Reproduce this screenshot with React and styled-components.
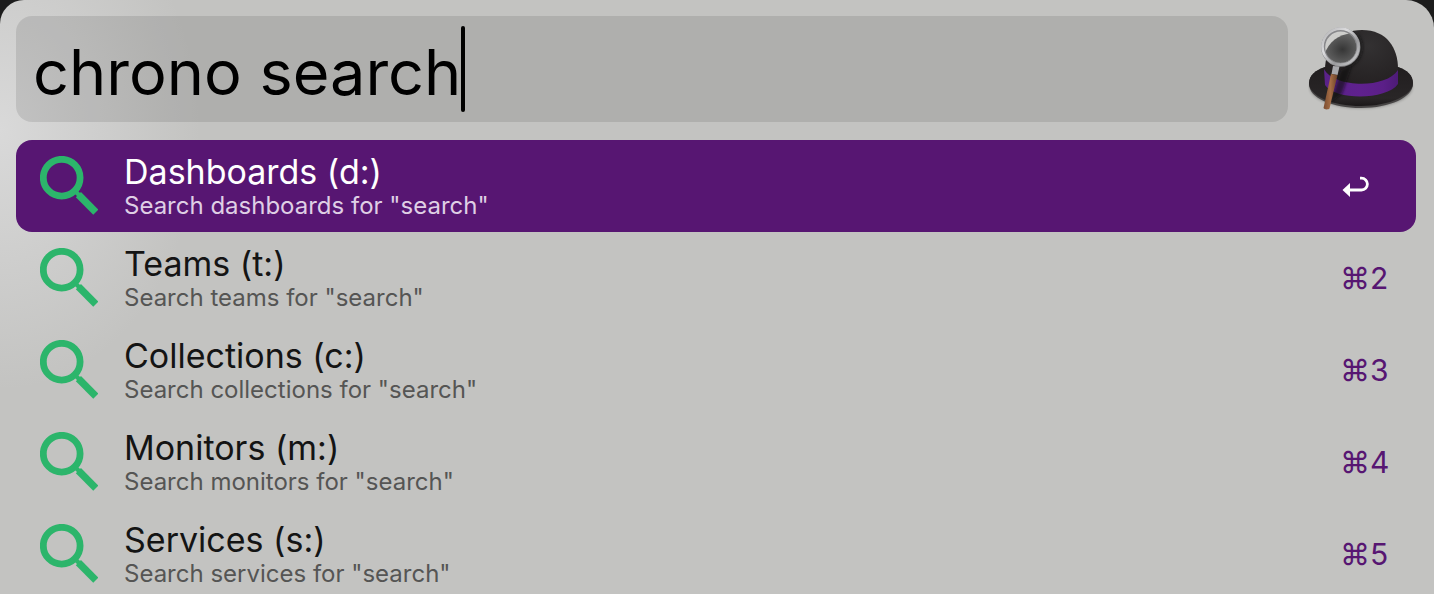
import React, { useState } from "react";
import styled, { createGlobalStyle } from "styled-components";

const GlobalStyle = createGlobalStyle`
  *, *::before, *::after { box-sizing: border-box; }
  html, body { margin: 0; }
  body {
    background: #1c1c1c;
    font-family: Inter, "Liberation Sans", sans-serif;
  }
`;

const Panel = styled.main`
  height: 100vh;
  overflow: hidden;
  padding: 16px 18px 0 16px;
  border-radius: 24px 28px 0 0;
  display: flex;
  flex-direction: column;
  gap: 18px;
  background:
    radial-gradient(ellipse 200px 260px at 0 130px, #d9d9d9 0%, #d9d9d900 100%),
    #c3c3c1;
`;

const SearchBar = styled.form`
  display: flex;
  align-items: center;
  gap: 20px;
`;

const Field = styled.label`
  flex: 1;
  height: 106px;
  padding: 0 17px;
  border-radius: 16px;
  display: flex;
  align-items: center;
  background: rgba(0, 0, 0, 0.102);
`;

const Query = styled.input`
  field-sizing: content;
  height: 86px;
  border: 0;
  padding: 6px 0 0;
  outline: 0;
  background: transparent;
  color: #000;
  font: 400 63px/80px Inter, "Liberation Sans", sans-serif;
  caret-color: transparent;
`;

const Caret = styled.span`
  width: 4px;
  height: 86px;
  border-radius: 2px;
  background: #000;
`;

const HatIcon = styled.svg`
  width: 108px;
  height: 92px;
  flex: none;
`;

const Results = styled.ul`
  margin: 0;
  padding: 0;
  list-style: none;
`;

const ResultButton = styled.button`
  width: 100%;
  height: 92px;
  padding: 0 28px 0 24px;
  border: 0;
  border-radius: 16px;
  display: flex;
  align-items: center;
  gap: 26px;
  font: inherit;
  text-align: left;
  background: ${(p) => (p.$active ? "#571672" : "transparent")};
  color: ${(p) => (p.$active ? "#fff" : "#141414")};
`;

const LensIcon = styled.svg`
  width: 58px;
  height: 60px;
  flex: none;
`;

const Copy = styled.span`
  flex: 1;
  padding-top: 4px;
  display: flex;
  flex-direction: column;
`;

const Title = styled.span`
  font-size: 34px;
  line-height: 36px;
`;

const Subtitle = styled.span`
  font-size: 24px;
  line-height: 32px;
  color: ${(p) => (p.$active ? "#dfcfe5" : "#555554")};
`;

const Shortcut = styled.span`
  width: 48px;
  display: flex;
  font-size: 30px;
  line-height: 40px;
  color: #571672;
`;

const ReturnIcon = styled.svg`
  width: 30px;
  height: 24px;
`;

const results = [
  { title: "Dashboards (d:)", noun: "dashboards" },
  { title: "Teams (t:)", noun: "teams" },
  { title: "Collections (c:)", noun: "collections" },
  { title: "Monitors (m:)", noun: "monitors" },
  { title: "Services (s:)", noun: "services" },
];

function Lens() {
  return (
    <LensIcon viewBox="0 0 58 60" aria-hidden="true" fill="none" stroke="#2cb56b">
      <circle cx="21.7" cy="21.7" r="18.4" strokeWidth="6.8" />
      <path d="M35 35L39 39" strokeWidth="4.4" />
      <path d="M38.4 38.6L55.8 56.2" strokeWidth="7.2" />
    </LensIcon>
  );
}

function BowlerHat() {
  return (
    <HatIcon viewBox="0 0 108 92" role="img" aria-label="Alfred">
      <defs>
        <radialGradient id="crown" cx="0.6" cy="0.25" r="0.7">
          <stop offset="0" stopColor="#333132" />
          <stop offset="0.6" stopColor="#292627" />
          <stop offset="1" stopColor="#231f20" />
        </radialGradient>
        <linearGradient id="brim" x1="0" y1="0" x2="0" y2="1">
          <stop offset="0" stopColor="#211e1f" />
          <stop offset="0.8" stopColor="#292627" />
          <stop offset="1" stopColor="#1b1819" />
        </linearGradient>
        <linearGradient id="band" x1="0" y1="0" x2="1" y2="0">
          <stop offset="0" stopColor="#5a2289" />
          <stop offset="0.5" stopColor="#5f218e" />
          <stop offset="0.8" stopColor="#5b1f88" />
          <stop offset="1" stopColor="#4d1b77" />
        </linearGradient>
        <radialGradient id="glass" cx="0.5" cy="0.5" r="0.55">
          <stop offset="0" stopColor="#363636" />
          <stop offset="1" stopColor="#6b6b6b" />
        </radialGradient>
        <linearGradient id="rim" x1="0" y1="0" x2="1" y2="1">
          <stop offset="0" stopColor="#aeaeb0" />
          <stop offset="0.35" stopColor="#dcdcde" />
          <stop offset="0.65" stopColor="#9a9a9d" />
          <stop offset="1" stopColor="#d4d4d6" />
        </linearGradient>
        <linearGradient id="wood" x1="0" y1="0" x2="1" y2="0">
          <stop offset="0" stopColor="#7a4c30" />
          <stop offset="0.5" stopColor="#a56d45" />
          <stop offset="1" stopColor="#6b4128" />
        </linearGradient>
        <filter id="soft" x="-20%" y="-20%" width="140%" height="140%">
          <feGaussianBlur stdDeviation="1.5" />
        </filter>
        <clipPath id="lensShape">
          <circle cx="32.5" cy="24" r="16" />
        </clipPath>
      </defs>
      <ellipse cx="53" cy="64" rx="51" ry="21" fill="#000" opacity="0.35" filter="url(#soft)" />
      <path d="M1 61C1 52 8 47 17 44L90 44C99 47 105 53 105 61C105 74 82 85 53 85C24 85 1 75 1 61Z" fill="#474545" />
      <path d="M1 60C1 52 8 47 17 44L90 44C99 47 105 52 105 60C105 72 82 83 53 83C24 83 1 73 1 60Z" fill="url(#brim)" />
      <path d="M17 47C17 25 30 7 54 7C79 7 90 25 90 46L90 62C76 75 30 75 17 62Z" fill="url(#crown)" />
      <path d="M16 46C26 65 78 66 90 47L90 61C79 77 28 78 17 62Z" fill="url(#band)" />
      <path d="M33 47L44 42L34 71L22 80Z" fill="#0d0a10" opacity="0.6" filter="url(#soft)" />
      <path d="M49 12C57 22 54 38 40 43" fill="none" stroke="#111" strokeWidth="3" opacity="0.6" filter="url(#soft)" />
      <g clipPath="url(#lensShape)">
        <circle cx="32.5" cy="24" r="17" fill="#cdcdcb" />
        <path d="M15 35C20 19 29 12 44 10L54 25L42 43L26 43Z" fill="url(#glass)" />
      </g>
      <circle cx="32.8" cy="24.2" r="17.6" fill="none" stroke="#88888b" strokeWidth="4" />
      <circle cx="32.5" cy="23.6" r="18" fill="none" stroke="url(#rim)" strokeWidth="2.6" />
      <path d="M25 43L31.5 43.5L29.5 52L23.5 51Z" fill="#a8a8ac" />
      <path d="M23 51L29.5 52L21.5 85.5C20 87 16 86.5 15.5 85Z" fill="url(#wood)" />
    </HatIcon>
  );
}

function Return() {
  return (
    <ReturnIcon viewBox="0 0 30 24" role="img" aria-label="Return">
      <path d="M10 16H21.5A5.9 5.9 0 0 0 21.5 4.2H20" fill="none" stroke="#fff" strokeWidth="2.8" />
      <path d="M2.5 16L10 9V23Z" fill="#fff" />
    </ReturnIcon>
  );
}

export default function App() {
  const [query, setQuery] = useState("chrono search");
  const term = query.replace(/^chrono\s*/, "");
  return (
    <>
      <GlobalStyle />
      <Panel>
        <SearchBar onSubmit={(e) => e.preventDefault()}>
          <Field>
            <Query
              aria-label="Search"
              autoComplete="off"
              spellCheck={false}
              value={query}
              onChange={(e) => setQuery(e.target.value)}
            />
            <Caret />
          </Field>
          <BowlerHat />
        </SearchBar>
        <Results>
          {results.map(({ title, noun }, i) => (
            <li key={noun}>
              <ResultButton type="button" $active={i === 0}>
                <Lens />
                <Copy>
                  <Title>{title}</Title>
                  <Subtitle $active={i === 0}>{`Search ${noun} for "${term}"`}</Subtitle>
                </Copy>
                <Shortcut>{i === 0 ? <Return /> : `⌘${i + 1}`}</Shortcut>
              </ResultButton>
            </li>
          ))}
        </Results>
      </Panel>
    </>
  );
}
